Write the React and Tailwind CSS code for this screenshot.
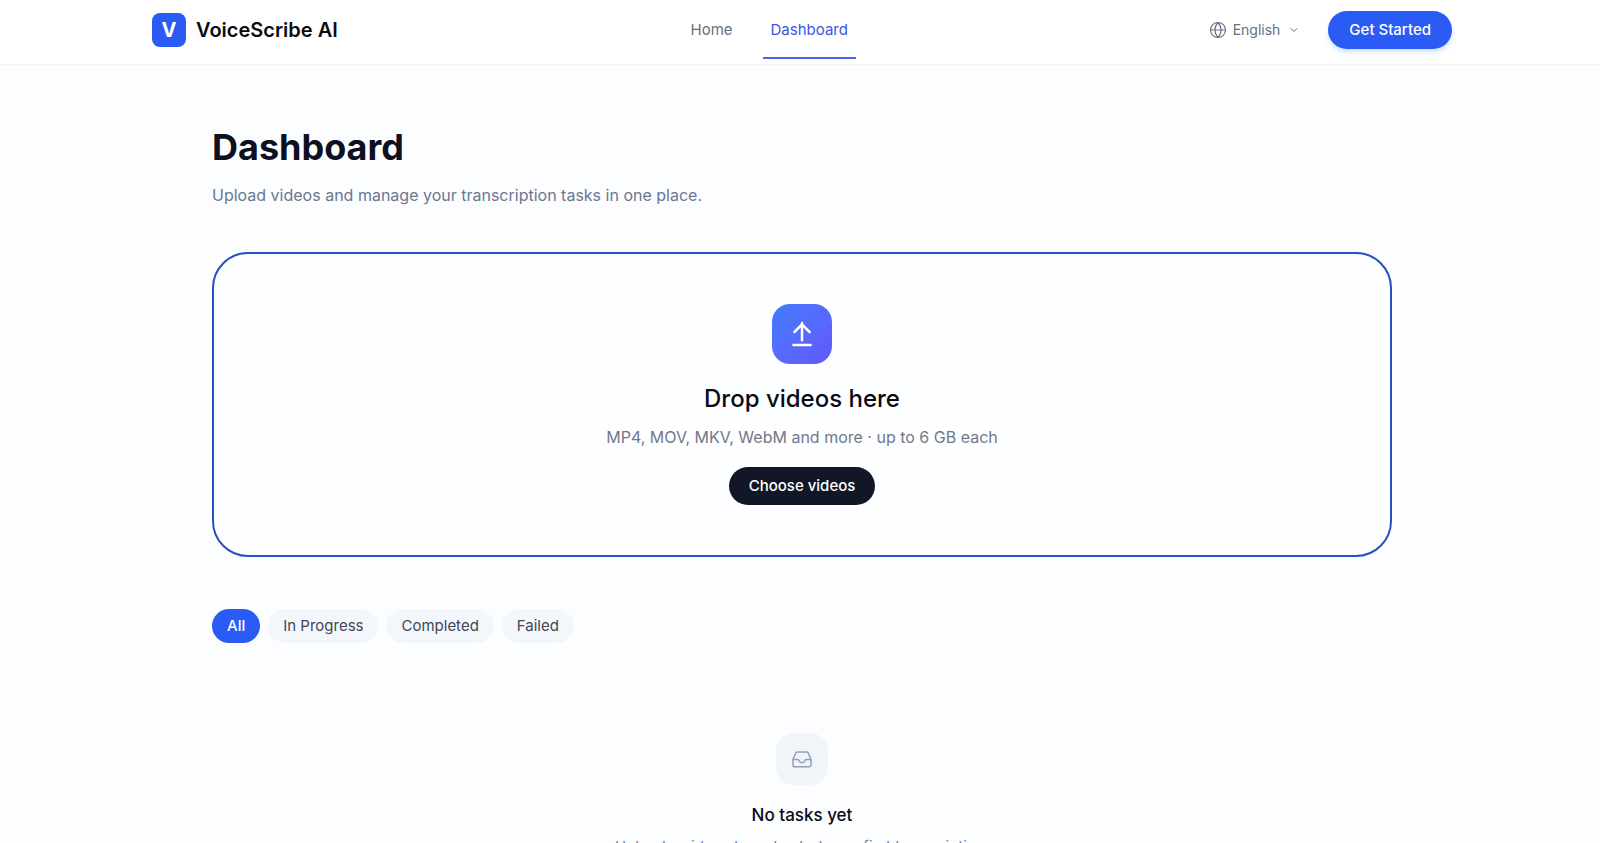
import { Globe, ChevronDown } from "lucide-react";

const navItems = [
  { label: "Home", active: false },
  { label: "Dashboard", active: true },
];

const filters = ["All", "In Progress", "Completed", "Failed"];

function UploadIcon() {
  return (
    <svg
      className="size-7"
      viewBox="0 0 28 28"
      fill="none"
      stroke="currentColor"
      strokeWidth="2.5"
      strokeLinecap="round"
      strokeLinejoin="round"
      aria-hidden="true"
    >
      <path d="M14 20.200V3M6.400 12L14 4.400L21.600 12M5.400 25H22.600" />
    </svg>
  );
}

function InboxIcon() {
  return (
    <svg
      className="size-6"
      viewBox="0 0 24 24"
      fill="none"
      stroke="currentColor"
      strokeWidth="1.5"
      strokeLinecap="round"
      strokeLinejoin="round"
      aria-hidden="true"
    >
      <path d="M3 12.500V18a1.800 1.800 0 0 0 1.800 1.800h14.400a1.800 1.800 0 0 0 1.800-1.800v-5.500L18.400 6.200A2 2 0 0 0 16.600 5H7.400a2 2 0 0 0-1.800 1.200Z" />
      <path d="M3 12.500h4.600a1.500 1.500 0 0 1 1.300.8l.6 1.200a1.800 1.800 0 0 0 1.600 1h1.800a1.800 1.800 0 0 0 1.600-1l.6-1.200a1.500 1.500 0 0 1 1.300-.8H21" />
    </svg>
  );
}

function Header() {
  return (
    <header className="border-b border-[#f3f5f8] bg-white pl-1">
      <div className="mx-auto flex h-16 max-w-[1300px] items-center justify-between pb-1">
        <a href="#" className="flex items-center gap-2.5 text-xl font-semibold text-[#090b14]">
          <span className="flex size-[34px] items-center justify-center rounded-lg bg-[#2b5bf5] text-xl font-bold text-white">
            V
          </span>
          VoiceScribe AI
        </a>
        <nav className="flex h-[58px] gap-[22px] text-[15px]">
          {navItems.map((item) => (
            <a
              key={item.label}
              href="#"
              aria-current={item.active ? "page" : undefined}
              className={
                item.active
                  ? "relative flex items-center px-2 text-[#3b55e6] after:absolute after:inset-x-0 after:bottom-0 after:h-0.5 after:bg-[#4f67e4]"
                  : "flex items-center px-2 text-[#667085]"
              }
            >
              {item.label}
            </a>
          ))}
        </nav>
        <div className="flex items-center gap-5">
          <button type="button" className="flex items-center gap-1.5 px-2 text-sm text-[#667085]">
            <Globe className="size-[18px]" strokeWidth={1.5} />
            English
            <ChevronDown className="ml-0.5 size-3" strokeWidth={2} />
          </button>
          <button
            type="button"
            className="h-[38px] rounded-full bg-[#2b5bf5] px-[21px] text-[15px] font-medium text-white shadow-md shadow-blue-500/20"
          >
            Get Started
          </button>
        </div>
      </div>
    </header>
  );
}

export default function App() {
  return (
    <div className="min-h-screen bg-[#fcfdff] font-['Inter',sans-serif]">
      <Header />
      <main className="pl-1">
        <div className="mx-auto max-w-[1180px] pt-[58px] pb-16">
          <h1 className="text-4xl leading-12 font-bold text-[#0c1020]">Dashboard</h1>
          <p className="mt-2.5 text-base leading-7 text-[#6b7790]">
            Upload videos and manage your transcription tasks in one place.
          </p>

          <section className="mt-[43px] flex flex-col items-center rounded-[36px] border-2 border-[#2850bd] bg-[#fdfeff] py-[50px]">
            <div className="flex size-[60px] items-center justify-center rounded-[18px] bg-linear-to-br from-[#407bff] to-[#6358fa] text-white">
              <UploadIcon />
            </div>
            <h2 className="mt-[17px] text-2xl leading-9 font-medium text-[#090b14]">Drop videos here</h2>
            <p className="mt-2 text-base leading-6 text-[#72788a]">
              MP4, MOV, MKV, WebM and more · up to 6 GB each
            </p>
            <button
              type="button"
              className="mt-[18px] h-[38px] rounded-full bg-[#111726] px-5 text-[15px] font-medium text-white"
            >
              Choose videos
            </button>
          </section>

          <div className="mt-[52px] flex gap-2">
            {filters.map((label, i) => (
              <button
                key={label}
                type="button"
                aria-pressed={i === 0}
                className={
                  i === 0
                    ? "h-[34px] rounded-full bg-[#2b5bf5] px-[15px] text-[15px] font-medium text-white"
                    : "h-[34px] rounded-full bg-[#f3f6fa] px-[15px] text-[15px] text-[#404657]"
                }
              >
                {label}
              </button>
            ))}
          </div>

          <section className="mt-[90px] flex flex-col items-center">
            <div className="flex size-[52px] items-center justify-center rounded-[18px] bg-[#f1f4f9] text-[#929fba]">
              <InboxIcon />
            </div>
            <h3 className="mt-[18px] text-[17px] leading-6 font-medium text-[#090b14]">No tasks yet</h3>
            <p className="mt-2 text-[15px] leading-6 text-[#72809a]">
              Upload a video above to start your first transcription.
            </p>
          </section>
        </div>
      </main>
    </div>
  );
}
